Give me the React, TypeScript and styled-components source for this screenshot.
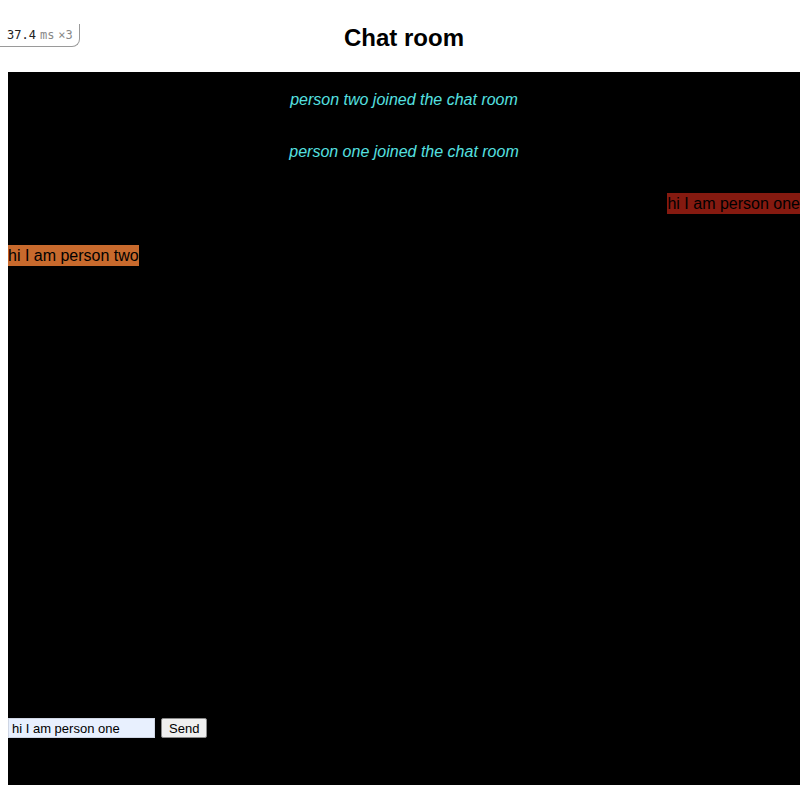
import React from "react";
import styled, { createGlobalStyle } from "styled-components";

const Global = createGlobalStyle`
  html, body { margin: 0; padding: 0; background: #fff; }
  body { font-family: "Liberation Sans", Arial, sans-serif; overflow: hidden; }
`;

const Page = styled.div`
  position: relative;
  padding: 0 0 0 8px;
  width: 800px;
  box-sizing: border-box;
`;

const PerfBadge = styled.div`
  position: absolute;
  top: 0;
  left: 0;
  height: 22px;
  padding: 0 6px 0 7px;
  display: flex;
  align-items: center;
  gap: 4px;
  background: #fff;
  border: 1px solid #9a9a9a;
  border-top: none;
  border-left: none;
  border-bottom-right-radius: 8px;
  font-family: "DejaVu Sans Mono", "Liberation Mono", monospace;
  font-size: 12px;
  color: #222;
  z-index: 2;
`;

const Dim = styled.span`
  color: #888;
`;

const Title = styled.h1`
  margin: 24px 0 20px;
  font-size: 24px;
  line-height: 28px;
  font-weight: bold;
  text-align: center;
  color: #000;
`;

const ChatBox = styled.div`
  background: #000;
  height: 720px;
  display: flex;
  flex-direction: column;
`;

const MessageList = styled.div`
  flex: 1;
  display: flex;
  flex-direction: column;
  gap: 31px;
  padding-top: 17px;
`;

const SystemLine = styled.div`
  text-align: center;
  font-style: italic;
  font-size: 16px;
  line-height: 21px;
  color: #55e0e0;
`;

const BubbleRow = styled.div<{ $mine: boolean }>`
  display: flex;
  justify-content: ${(p) => (p.$mine ? "flex-end" : "flex-start")};
`;

const Bubble = styled.span<{ $bg: string }>`
  background: ${(p) => p.$bg};
  color: #000;
  font-size: 16px;
  line-height: 21px;
  white-space: nowrap;
`;

const Form = styled.form`
  display: flex;
  align-items: center;
  gap: 6px;
  margin-bottom: 54px;
`;

const Input = styled.input`
  width: 147px;
  height: 20px;
  box-sizing: border-box;
  border: 1px solid #cfd6e4;
  background: #e8f0fe;
  padding: 0 3px;
  font-family: "Liberation Sans", Arial, sans-serif;
  font-size: 13px;
  color: #000;
  outline: none;
`;

const SendButton = styled.button`
  height: 20px;
  padding: 0 7px;
  box-sizing: border-box;
  border: 1px solid #8a8a8a;
  border-radius: 2px;
  background: #efefef;
  font-family: "Liberation Sans", Arial, sans-serif;
  font-size: 13px;
  color: #000;
`;

const messages = [
  { type: "system", text: "person two joined the chat room" },
  { type: "system", text: "person one joined the chat room" },
  { type: "mine", text: "hi I am person one" },
  { type: "other", text: "hi I am person two" },
];

export default function App() {
  return (
    <>
      <Global />
      <Page>
        <PerfBadge>
          37.4 <Dim>ms</Dim> <Dim>×3</Dim>
        </PerfBadge>
        <Title>Chat room</Title>
        <ChatBox>
          <MessageList>
            {messages.map((m, i) =>
              m.type === "system" ? (
                <SystemLine key={i}>{m.text}</SystemLine>
              ) : (
                <BubbleRow key={i} $mine={m.type === "mine"}>
                  <Bubble $bg={m.type === "mine" ? "#851a10" : "#c86a2d"}>{m.text}</Bubble>
                </BubbleRow>
              )
            )}
          </MessageList>
          <Form onSubmit={(e) => e.preventDefault()}>
            <Input defaultValue="hi I am person one" />
            <SendButton type="submit">Send</SendButton>
          </Form>
        </ChatBox>
      </Page>
    </>
  );
}
